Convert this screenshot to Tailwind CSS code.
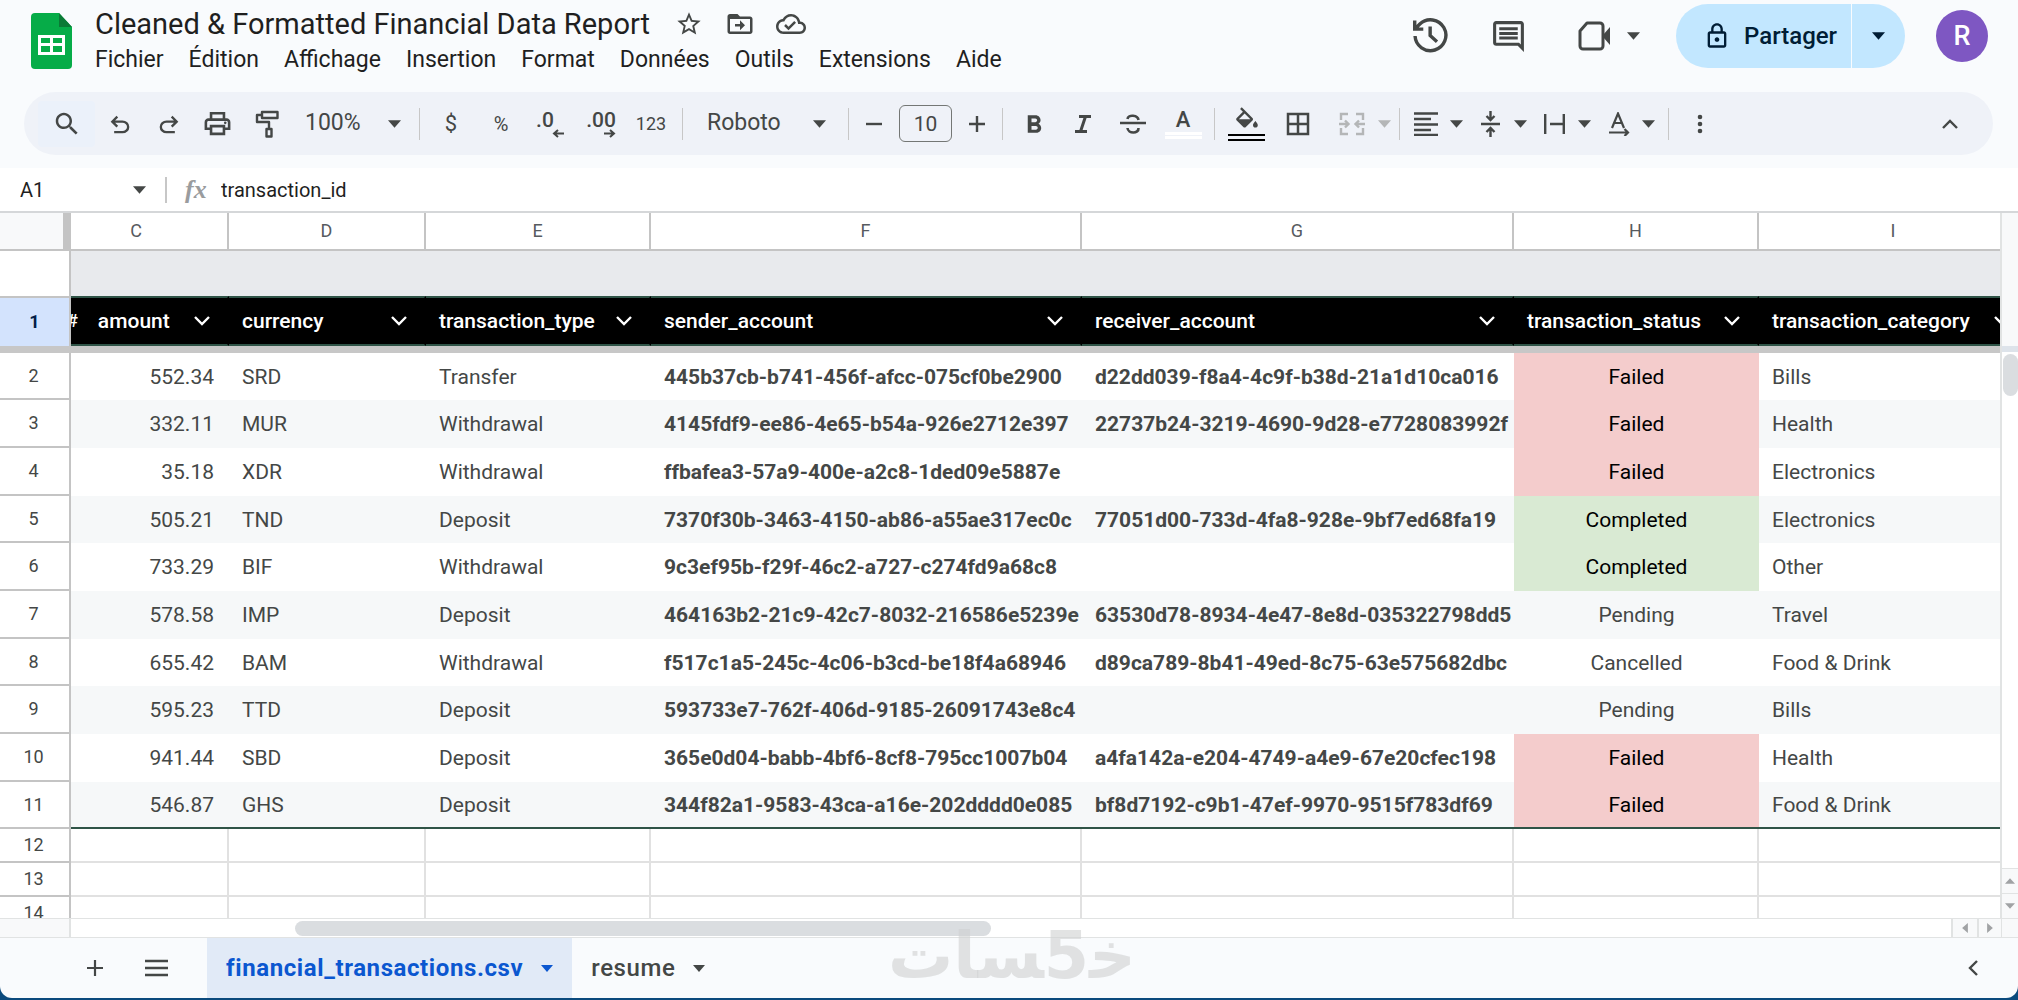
<!DOCTYPE html>
<html lang="fr">
<head>
    <meta charset="UTF-8">
    <meta name="viewport" content="width=device-width, initial-scale=1.0">
    <title>Cleaned &amp; Formatted Financial Data Report</title>
    <script src="https://cdn.jsdelivr.net/npm/@tailwindcss/browser@4"></script>
</head>
<body class="bg-[#0b4a7d] font-['Roboto',sans-serif] text-[#444746]">
    <!-- Shared icons -->
    <svg class="hidden">
        <symbol id="caret" viewBox="0 0 14 8"><path d="M0 0h14L7 8z" fill="currentColor"/></symbol>
        <symbol id="chevron" viewBox="0 0 18 12"><path d="M2 2l7 7 7-7" fill="none" stroke="currentColor" stroke-width="2.4"/></symbol>
    </svg>

    <div class="relative flex h-[calc(100vh-2px)] flex-col overflow-hidden rounded-b-xl bg-[#f9fbfd]">

        <!-- Title bar -->
        <header class="flex h-[92px] shrink-0 items-start">
            <svg class="mt-[13px] ml-[31px] h-[56px] w-[41px]" viewBox="0 0 41 56">
                <path d="M4 0h24l13 14v38a4 4 0 0 1-4 4H4a4 4 0 0 1-4-4V4a4 4 0 0 1 4-4z" fill="#06ac48"/>
                <path d="M28 0l13 14H28z" fill="#0b7a36"/>
                <path d="M7 22h27v20H7zm3 3v5h9v-5zm12 0v5h9v-5zM10 33v6h9v-6zm12 0v6h9v-6z" fill="#fff" fill-rule="evenodd"/>
            </svg>
            <div class="ml-[23px] flex flex-col">
                <div class="flex h-[46px] items-center pt-[2px]">
                    <h1 class="text-[29px] leading-[46px] text-[#1f1f1f]">Cleaned &amp; Formatted Financial Data Report</h1>
                    <button class="ml-[25px]" aria-label="Suivre"><svg class="size-[28px]" viewBox="0 0 24 24" fill="currentColor"><path d="M22 9.24l-7.19-.62L12 2 9.19 8.63 2 9.24l5.46 4.73L5.82 21 12 17.27 18.18 21l-1.63-7.03L22 9.24zM12 15.4l-3.76 2.27 1-4.28-3.32-2.88 4.38-.38L12 6.1l1.71 4.04 4.38.38-3.32 2.88 1 4.28L12 15.4z"/></svg></button>
                    <button class="ml-[22px]" aria-label="Déplacer"><svg class="size-[30px]" viewBox="0 0 24 24" fill="currentColor"><path d="M20 6h-8l-2-2H4c-1.100 0-2 .9-2 2v12c0 1.100.9 2 2 2h16c1.100 0 2-.9 2-2V8c0-1.100-.9-2-2-2zm0 12H4V8h16v10zm-8-1 4-4-4-4v3H8v2h4z"/></svg></button>
                    <button class="ml-[21px]" aria-label="Enregistré dans Drive"><svg class="size-[30px]" viewBox="0 0 24 24" fill="currentColor"><path d="M19.35 10.04C18.67 6.59 15.64 4 12 4 9.11 4 6.6 5.64 5.35 8.04 2.34 8.36 0 10.91 0 14c0 3.31 2.69 6 6 6h13c2.76 0 5-2.24 5-5 0-2.64-2.05-4.78-4.65-4.96zM19 18H6c-2.21 0-4-1.79-4-4 0-2.05 1.53-3.76 3.56-3.97l1.07-.11.5-.95C8.08 7.14 9.94 6 12 6c2.62 0 4.88 1.86 5.39 4.43l.3 1.5 1.53.11c1.56.1 2.78 1.41 2.78 2.96 0 1.65-1.35 3-3 3zm-9-3.82l-2.09-2.09L6.5 13.5 10 17l6.01-6.01-1.41-1.41z"/></svg></button>
                </div>
                <nav class="flex gap-[25px] text-[23px] leading-[28px] text-[#1f1f1f]">
                    <button>Fichier</button>
                    <button>Édition</button>
                    <button>Affichage</button>
                    <button>Insertion</button>
                    <button>Format</button>
                    <button>Données</button>
                    <button>Outils</button>
                    <button>Extensions</button>
                    <button>Aide</button>
                </nav>
            </div>

            <div class="mt-1 mr-[30px] ml-auto flex h-[64px] items-center">
                <button aria-label="Historique"><svg class="size-[36px]" viewBox="2 2 21 21" fill="none" stroke="currentColor" stroke-width="2"><path d="M3.200 12.500a9 9 0 1 0 2.800-7L3 8.500M3 3.500v5h5M12 7v5.200l4 3.600"/></svg></button>
                <button class="ml-[41px]" aria-label="Commentaires"><svg class="size-[37px]" viewBox="0 0 24 24" fill="currentColor"><path d="M21.990 4c0-1.100-.89-2-1.990-2H4c-1.100 0-2 .9-2 2v12c0 1.100.9 2 2 2h14l4 4-.01-18zM20 4v13.170L18.830 16H4V4h16zM6 12h12v2H6zm0-3h12v2H6zm0-3h12v2H6z"/></svg></button>
                <button class="ml-[51px] flex items-center gap-[17px]" aria-label="Appel"><svg class="h-[30px] w-[32px]" viewBox="0 0 32 30"><path d="M9 2h13a3 3 0 0 1 3 3v20a3 3 0 0 1-3 3H5a3 3 0 0 1-3-3V10z" fill="none" stroke="currentColor" stroke-width="3" stroke-linejoin="round"/><path d="M25 14l7-8v18l-7-8z" fill="currentColor"/></svg><svg class="h-[8px] w-[13px]"><use href="#caret"/></svg></button>
                <button class="ml-[36px] flex h-full w-[175px] items-center rounded-l-full bg-[#c2e7ff] pl-[27px] text-[24px] font-medium text-[#001d35]">
                    <svg class="mr-[13px] size-[28px]" viewBox="0 0 24 24" fill="currentColor"><path d="M18 8h-1V6c0-2.760-2.240-5-5-5S7 3.240 7 6v2H6c-1.100 0-2 .9-2 2v10c0 1.100.9 2 2 2h12c1.100 0 2-.9 2-2V10c0-1.100-.9-2-2-2zM9 6c0-1.660 1.340-3 3-3s3 1.340 3 3v2H9V6zm9 14H6V10h12v10zm-6-3c1.100 0 2-.9 2-2s-.9-2-2-2-2 .9-2 2 .9 2 2 2z"/></svg>
                    Partager
                </button>
                <button class="ml-px flex h-full w-[53px] items-center rounded-r-full bg-[#c2e7ff] pl-[20px] text-[#001d35]" aria-label="Options de partage"><svg class="h-[8px] w-[13px]"><use href="#caret"/></svg></button>
                <button class="ml-[31px] size-[52px] rounded-full bg-[#7e57c2] text-[27px] font-medium text-white">R</button>
            </div>
        </header>

        <!-- Toolbar -->
        <div class="mr-[25px] ml-[24px] flex h-[63px] shrink-0 items-center rounded-full bg-[#eff2f8] pl-[14px]">
            <button class="flex h-[46px] w-[57px] items-center justify-center rounded bg-[#ebf1fa]" aria-label="Rechercher"><svg class="size-[30px]" viewBox="0 0 24 24" fill="currentColor"><path d="M15.500 14h-.79l-.28-.27C15.410 12.590 16 11.110 16 9.500 16 5.910 13.090 3 9.500 3S3 5.910 3 9.500 5.910 16 9.500 16c1.610 0 3.090-.59 4.230-1.570l.27.28v.79l5 4.990L20.490 19l-4.990-5zm-6 0C7.010 14 5 11.990 5 9.500S7.010 5 9.500 5 14 7.010 14 9.500 11.990 14 9.500 14z"/></svg></button>
            <button class="flex w-[49px] justify-center" aria-label="Annuler"><svg class="size-[28px]" viewBox="0 0 24 24" fill="currentColor"><path d="M7 20v-2h7.100q1.575 0 2.738-1T18 14.500 16.838 12 14.100 11H7.800l2.600 2.600L9 15l-5-5 5-5 1.400 1.400L7.800 9h6.300q2.425 0 4.163 1.575T20 14.500t-1.737 3.925T14.100 20H7z"/></svg></button>
            <button class="flex w-[49px] justify-center" aria-label="Rétablir"><svg class="size-[28px] -scale-x-100" viewBox="0 0 24 24" fill="currentColor"><path d="M7 20v-2h7.100q1.575 0 2.738-1T18 14.500 16.838 12 14.100 11H7.800l2.600 2.600L9 15l-5-5 5-5 1.400 1.400L7.800 9h6.300q2.425 0 4.163 1.575T20 14.500t-1.737 3.925T14.100 20H7z"/></svg></button>
            <button class="flex w-[49px] justify-center" aria-label="Imprimer"><svg class="size-[31px]" viewBox="0 0 24 24" fill="currentColor"><path d="M19 8h-1V3H6v5H5c-1.660 0-3 1.340-3 3v6h4v4h12v-4h4v-6c0-1.660-1.340-3-3-3zM8 5h8v3H8V5zm8 12v2H8v-4h8v2zm2-2v-2H6v2H4v-4c0-.55.45-1 1-1h14c.55 0 1 .45 1 1v4h-2z"/><circle cx="18" cy="11.500" r="1"/></svg></button>
            <button class="flex w-[49px] justify-center" aria-label="Reproduire la mise en forme"><svg class="h-[28px] w-[24px]" viewBox="0 0 24 28" fill="none" stroke="currentColor" stroke-width="2.400"><path d="M7 2h15.500v6H7zM7 5H2v7h12v7M11.500 19h5v7.500h-5z" stroke-linejoin="round"/></svg></button>
            <div class="flex w-[122px] items-center justify-between pr-[12px] pl-[14px]">
                <select class="appearance-none text-[23px]" aria-label="Zoom"><option>100%</option></select>
                <svg class="h-[8px] w-[13px]"><use href="#caret"/></svg>
            </div>
            <span class="mx-[6px] h-[32px] w-px bg-[#c7c7c7]"></span>
            <button class="w-[50px] text-[22px]">$</button>
            <button class="w-[50px] text-[20px]">%</button>
            <button class="flex w-[50px] justify-center pr-[12px]" aria-label="Réduire les décimales">
                <span class="relative pb-[8px] text-[21px] leading-[20px] font-medium">.0<svg class="absolute -right-[10px] bottom-0 h-[9px] w-[12px]" viewBox="0 0 12 9" fill="none" stroke="currentColor" stroke-width="2"><path d="M12 4.500H2M6 1L2 4.500 6 8"/></svg></span>
            </button>
            <button class="flex w-[50px] justify-center" aria-label="Augmenter les décimales">
                <span class="relative pb-[8px] text-[21px] leading-[20px] font-medium">.00<svg class="absolute right-0 bottom-0 h-[9px] w-[12px]" viewBox="0 0 12 9" fill="none" stroke="currentColor" stroke-width="2"><path d="M0 4.500h10M6 1l4 3.500L6 8"/></svg></span>
            </button>
            <button class="w-[50px] text-[18px]">123</button>
            <span class="mx-[6px] h-[32px] w-px bg-[#c7c7c7]"></span>
            <div class="flex w-[153px] items-center justify-between pr-[16px] pl-[18px]">
                <select class="appearance-none text-[23px]" aria-label="Police"><option>Roboto</option></select>
                <svg class="h-[8px] w-[13px]"><use href="#caret"/></svg>
            </div>
            <span class="mx-[6px] h-[32px] w-px bg-[#c7c7c7]"></span>
            <button class="flex w-[38px] justify-center" aria-label="Diminuer"><svg class="size-[18px]" viewBox="0 0 18 18" stroke="currentColor" stroke-width="2.400"><path d="M1 9h16"/></svg></button>
            <input class="mx-[6px] h-[37px] w-[53px] rounded-md border border-[#747775] text-center text-[21px]" value="10" aria-label="Taille de police">
            <button class="flex w-[38px] justify-center" aria-label="Augmenter"><svg class="size-[18px]" viewBox="0 0 18 18" stroke="currentColor" stroke-width="2.400"><path d="M1 9h16M9 1v16"/></svg></button>
            <span class="mx-[6px] h-[32px] w-px bg-[#c7c7c7]"></span>
            <button class="flex w-[49px] justify-center" aria-label="Gras"><svg class="size-[30px]" viewBox="0 0 24 24" fill="currentColor"><path d="M15.600 11.790c.97-.67 1.650-1.770 1.650-2.790 0-2.260-1.750-4-4-4H7v14h7.040c2.090 0 3.710-1.700 3.710-3.790 0-1.520-.86-2.820-2.150-3.420zM10 7.500h3c.83 0 1.500.67 1.500 1.500s-.67 1.500-1.500 1.500h-3v-3zm3.500 9H10v-3h3.500c.83 0 1.500.67 1.500 1.500s-.67 1.500-1.500 1.500z"/></svg></button>
            <button class="flex w-[50px] justify-center" aria-label="Italique"><svg class="size-[20px]" viewBox="0 0 20 20" fill="none" stroke="currentColor" stroke-width="3"><path d="M6 2.500h12M2 17.500h12M12.500 2.500l-5 15"/></svg></button>
            <button class="flex w-[50px] justify-center" aria-label="Barré"><svg class="h-[20px] w-[26px]" viewBox="0 0 26 20" fill="none" stroke="currentColor" stroke-width="2.600"><path d="M0 9h26M18.500 6c-.5-5-10.500-6-11-1M7.500 14c.5 6 11.500 6 11 0"/></svg></button>
            <button class="flex w-[50px] flex-col items-center" aria-label="Couleur du texte">
                <span class="text-[22px] leading-[24px] font-medium">A</span>
                <span class="h-[7px] w-[37px] border-y-[3px] border-white"></span>
            </button>
            <span class="mx-[6px] h-[32px] w-px bg-[#c7c7c7]"></span>
            <button class="flex w-[51px] flex-col items-center gap-[4px]" aria-label="Couleur de remplissage">
                <svg class="size-[24px]" viewBox="2 0 20 18" fill="currentColor"><path d="M16.560 8.940L7.620 0 6.210 1.410l2.380 2.380-5.150 5.150c-.59.59-.59 1.540 0 2.120l5.500 5.500c.29.29.68.44 1.060.44s.77-.15 1.060-.44l5.500-5.500c.59-.58.59-1.530 0-2.120zM5.210 10L10 5.210 14.790 10H5.210zM19 11.500s-2 2.170-2 3.500c0 1.100.9 2 2 2s2-.9 2-2c0-1.330-2-3.500-2-3.500z"/></svg>
                <span class="h-[7px] w-[37px] border-y-2 border-black"></span>
            </button>
            <button class="flex w-[51px] justify-center" aria-label="Bordures"><svg class="size-[30px]" viewBox="0 0 24 24" fill="currentColor"><path d="M3 3v18h18V3H3zm8 16H5v-6h6v6zm0-8H5V5h6v6zm8 8h-6v-6h6v6zm0-8h-6V5h6v6z"/></svg></button>
            <button class="flex w-[70px] items-center gap-[13px] pl-[16px] text-[#b4b6b7]" aria-label="Fusionner"><svg class="h-[24px] w-[26px]" viewBox="0 0 26 24" fill="none" stroke="currentColor" stroke-width="2.400"><path d="M9 2H2v6M2 16v6h7M17 2h7v6M24 16v6h-7M0 12h9M6 8.500L9.500 12 6 15.500M26 12h-9M20 8.500L16.500 12l3.500 3.500"/></svg><svg class="h-[8px] w-[13px]"><use href="#caret"/></svg></button>
            <span class="mx-[6px] h-[32px] w-px bg-[#c7c7c7]"></span>
            <button class="flex w-[64px] items-center justify-between pr-[7px] pl-[8px]" aria-label="Alignement horizontal"><svg class="size-[24px]" viewBox="0 0 24 24" stroke="currentColor" stroke-width="2.400"><path d="M0 1.500h24M0 7h17M0 12.500h24M0 18h17M0 23h24"/></svg><svg class="h-[8px] w-[13px]"><use href="#caret"/></svg></button>
            <button class="flex w-[64px] items-center justify-between pr-[7px] pl-[11px]" aria-label="Alignement vertical"><svg class="h-[26px] w-[19px]" viewBox="0 0 19 26" fill="none" stroke="currentColor" stroke-width="2.400"><path d="M0 13h19M9.500 0v8M5.500 5l4 4 4-4M9.500 26v-8M5.500 21l4-4 4 4"/></svg><svg class="h-[8px] w-[13px]"><use href="#caret"/></svg></button>
            <button class="flex w-[64px] items-center justify-between pr-[7px] pl-[10px]" aria-label="Retour à la ligne"><svg class="h-[20px] w-[21px]" viewBox="0 0 21 20" fill="none" stroke="currentColor" stroke-width="2.400"><path d="M1.200 0v20M19.800 0v20M6 10h13"/></svg><svg class="h-[8px] w-[13px]"><use href="#caret"/></svg></button>
            <button class="flex w-[64px] items-center justify-between pr-[7px] pl-[11px]" aria-label="Rotation du texte"><svg class="h-[24px] w-[21px]" viewBox="0 0 21 24" fill="none" stroke="currentColor" stroke-width="2.200"><path d="M3 16L9 1.500 15 16M5 11h8M0 20.500h18M15.500 17l3.500 3.500-3.500 3.500"/></svg><svg class="h-[8px] w-[13px]"><use href="#caret"/></svg></button>
            <span class="mx-[6px] h-[32px] w-px bg-[#c7c7c7]"></span>
            <button class="flex w-[50px] justify-center" aria-label="Plus"><svg class="h-[20px] w-[6px]" viewBox="0 0 6 20" fill="currentColor"><circle cx="3" cy="3" r="2.300"/><circle cx="3" cy="10" r="2.300"/><circle cx="3" cy="17" r="2.300"/></svg></button>
            <button class="mr-[18px] ml-auto flex w-[50px] justify-center" aria-label="Masquer les menus"><svg class="h-[12px] w-[18px] rotate-180"><use href="#chevron"/></svg></button>
        </div>

        <!-- Formula bar -->
        <div class="mt-[13px] flex h-[45px] shrink-0 items-center border-b-2 border-[#d5d7d9] bg-white text-[20px] text-[#1f1f1f]">
            <input class="ml-[20px] w-[113px]" value="A1" aria-label="Zone Nom">
            <svg class="h-[8px] w-[13px] text-[#444746]"><use href="#caret"/></svg>
            <span class="ml-[19px] h-[26px] w-[2px] bg-[#c7c7c7]"></span>
            <span class="ml-[18px] w-[36px] font-['Liberation_Serif',serif] text-[26px] leading-[28px] font-bold text-[#9a9c9e] italic">fx</span>
            <input class="grow" value="transaction_id" aria-label="Barre de formule">
        </div>

        <!-- Grid -->
        <div class="flex min-h-0 grow bg-white">
            <div class="min-w-0 grow overflow-hidden">
                <table class="w-[2029px] table-fixed border-separate border-spacing-0 text-[21px] leading-[28px]">
                    <colgroup>
                        <col class="w-[71px]">
                        <col class="w-[158px]">
                        <col class="w-[197px]">
                        <col class="w-[225px]">
                        <col class="w-[431px]">
                        <col class="w-[432px]">
                        <col class="w-[245px]">
                        <col class="w-[270px]">
                    </colgroup>
                    <thead>
                        <tr class="h-[38px] text-[18px] text-[#575b5f]">
                            <th class="border-r-8 border-b-2 border-[#c4c4c4] bg-[#f8f9fa]"></th>
                            <th class="border-r-2 border-b-2 border-[#c4c4c4] pr-[26px] font-normal">C</th>
                            <th class="border-r-2 border-b-2 border-[#c4c4c4] font-normal">D</th>
                            <th class="border-r-2 border-b-2 border-[#c4c4c4] font-normal">E</th>
                            <th class="border-r-2 border-b-2 border-[#c4c4c4] font-normal">F</th>
                            <th class="border-r-2 border-b-2 border-[#c4c4c4] font-normal">G</th>
                            <th class="border-r-2 border-b-2 border-[#c4c4c4] font-normal">H</th>
                            <th class="border-r-2 border-b-2 border-[#c4c4c4] font-normal">I</th>
                        </tr>
                        <tr class="h-[45px]">
                            <td class="border-r-2 border-[#c4c4c4]"></td>
                            <td class="bg-[#e8eaed]" colspan="7"></td>
                        </tr>
                        <tr id="headings" class="h-[50px] text-white">
                            <th class="border-t-2 border-r-2 border-[#c4c4c4] bg-[#d3e3fd] text-[18px] font-bold text-[#041e49]">1</th>
                        </tr>
                        <tr class="h-[7px]">
                            <td class="bg-[#c7c7c7] p-0" colspan="8"></td>
                        </tr>
                    </thead>
                    <tbody id="rows"></tbody>
                </table>
            </div>

            <!-- Vertical scrollbar -->
            <div class="flex w-[18px] shrink-0 flex-col border-l-2 border-[#e1e3e3]">
                <div class="h-[133px] bg-[#f8f9fa]"></div>
                <div class="h-[6px] bg-[#dde3ea]"></div>
                <div class="mt-[2px] ml-px h-[42px] rounded-full bg-[#dadde0]"></div>
                <button class="mt-auto flex h-[26px] items-center justify-center border-y border-[#e1e3e3] bg-[#f8f9fa] text-[#a0a2a4]" aria-label="Haut"><svg class="h-[6px] w-[10px] rotate-180"><use href="#caret"/></svg></button>
                <button class="flex h-[24px] items-center justify-center bg-[#f8f9fa] text-[#a0a2a4]" aria-label="Bas"><svg class="h-[6px] w-[10px]"><use href="#caret"/></svg></button>
            </div>
        </div>

        <!-- Horizontal scrollbar -->
        <div class="flex h-[20px] shrink-0 border-y border-[#e1e3e3] bg-white">
            <div class="w-[71px] border-r-2 border-[#e1e3e3] bg-[#f8f9fa]"></div>
            <div class="flex grow items-center pl-[224px]"><div class="h-[15px] w-[42%] rounded-full bg-[#dadde0]"></div></div>
            <button class="flex w-[26px] items-center justify-center border-l-2 border-[#e1e3e3] bg-[#f8f9fa] text-[#a0a2a4]" aria-label="Gauche"><svg class="h-[6px] w-[10px] rotate-90"><use href="#caret"/></svg></button>
            <button class="flex w-[24px] items-center justify-center border-l-2 border-[#e1e3e3] bg-[#f8f9fa] text-[#a0a2a4]" aria-label="Droite"><svg class="h-[6px] w-[10px] -rotate-90"><use href="#caret"/></svg></button>
            <div class="w-[17px] border-l border-[#e1e3e3] bg-[#f8f9fa]"></div>
        </div>

        <!-- Sheet tabs -->
        <footer class="flex h-[60px] shrink-0 items-center text-[24px] font-medium tracking-wide">
            <button class="ml-[86px]" aria-label="Ajouter une feuille"><svg class="size-[18px]" viewBox="0 0 18 18" stroke="currentColor" stroke-width="2.200"><path d="M1 9h16M9 1v16"/></svg></button>
            <button class="ml-[41px]" aria-label="Toutes les feuilles"><svg class="h-[18px] w-[23px]" viewBox="0 0 23 18" stroke="currentColor" stroke-width="2.600"><path d="M0 2h23M0 9h23M0 16h23"/></svg></button>
            <button class="ml-[39px] flex h-full items-center gap-[18px] bg-[#e1eaf7] px-[19px] font-bold text-[#0b57d0]">financial_transactions.csv<svg class="h-[7px] w-[12px]"><use href="#caret"/></svg></button>
            <button class="ml-[19px] flex items-center gap-[18px]">resume<svg class="h-[7px] w-[12px]"><use href="#caret"/></svg></button>
            <button class="mr-[36px] ml-auto" aria-label="Afficher le panneau"><svg class="h-[12px] w-[18px] rotate-90"><use href="#chevron"/></svg></button>
        </footer>

        <!-- Watermark -->
        <div class="pointer-events-none absolute bottom-[8px] left-[44%] font-['DejaVu_Sans',sans-serif] text-[65px] leading-[68px] font-bold text-[#cfd1d1]/60" dir="rtl" lang="ar">خ&zwj;5&zwj;سات</div>
    </div>

    <script>
        const headings = ['amount', 'currency', 'transaction_type', 'sender_account', 'receiver_account', 'transaction_status', 'transaction_category'];

        const data = [
            ['552.34', 'SRD', 'Transfer', '445b37cb-b741-456f-afcc-075cf0be2900', 'd22dd039-f8a4-4c9f-b38d-21a1d10ca016', 'Failed', 'Bills'],
            ['332.11', 'MUR', 'Withdrawal', '4145fdf9-ee86-4e65-b54a-926e2712e397', '22737b24-3219-4690-9d28-e7728083992f', 'Failed', 'Health'],
            ['35.18', 'XDR', 'Withdrawal', 'ffbafea3-57a9-400e-a2c8-1ded09e5887e', '', 'Failed', 'Electronics'],
            ['505.21', 'TND', 'Deposit', '7370f30b-3463-4150-ab86-a55ae317ec0c', '77051d00-733d-4fa8-928e-9bf7ed68fa19', 'Completed', 'Electronics'],
            ['733.29', 'BIF', 'Withdrawal', '9c3ef95b-f29f-46c2-a727-c274fd9a68c8', '', 'Completed', 'Other'],
            ['578.58', 'IMP', 'Deposit', '464163b2-21c9-42c7-8032-216586e5239e', '63530d78-8934-4e47-8e8d-035322798dd5', 'Pending', 'Travel'],
            ['655.42', 'BAM', 'Withdrawal', 'f517c1a5-245c-4c06-b3cd-be18f4a68946', 'd89ca789-8b41-49ed-8c75-63e575682dbc', 'Cancelled', 'Food & Drink'],
            ['595.23', 'TTD', 'Deposit', '593733e7-762f-406d-9185-26091743e8c4', '', 'Pending', 'Bills'],
            ['941.44', 'SBD', 'Deposit', '365e0d04-babb-4bf6-8cf8-795cc1007b04', 'a4fa142a-e204-4749-a4e9-67e20cfec198', 'Failed', 'Health'],
            ['546.87', 'GHS', 'Deposit', '344f82a1-9583-43ca-a16e-202dddd0e085', 'bf8d7192-c9b1-47ef-9970-9515f783df69', 'Failed', 'Food & Drink'],
        ];

        const cellClass = [
            'pr-[15px] text-right',
            'pl-[13px]',
            'pl-[13px]',
            'pl-[13px] font-bold',
            'pl-[13px] font-bold',
            'text-center',
            'pl-[13px]',
        ];

        const statusClass = {
            Failed: 'bg-[#f4cccc] text-black',
            Completed: 'bg-[#d9ead3] text-black',
        };

        const headRow = document.getElementById('headings');
        headings.forEach((name, i) => {
            const th = document.createElement('th');
            th.className = 'overflow-hidden border-y-2 border-r-2 border-y-[#2f5447] border-r-black bg-black p-0 font-medium';
            const hash = i === 0 ? '<span class="-ml-[4px] mr-[20px] text-[18px]">#</span>' : '';
            const pad = i === 0 ? '' : 'pl-[13px]';
            th.innerHTML = `<div class="flex items-center pr-[16px] ${pad}">${hash}<span>${name}</span><svg class="ml-auto h-[12px] w-[18px] shrink-0"><use href="#chevron"/></svg></div>`;
            headRow.appendChild(th);
        });

        const body = document.getElementById('rows');
        data.forEach((record, i) => {
            const last = i === data.length - 1;
            const tr = document.createElement('tr');
            tr.className = (i % 3 === 0 ? 'h-[47px]' : 'h-[48px]') + (i % 2 ? ' bg-[#f6f8f9]' : '');

            const num = document.createElement('th');
            num.className = 'border-r-2 border-b-2 border-[#c4c4c4] bg-white p-0 pr-[2px] text-[18px] font-normal';
            num.textContent = i + 2;
            tr.appendChild(num);

            record.forEach((value, c) => {
                const td = document.createElement('td');
                td.className = 'whitespace-nowrap py-0 ' + cellClass[c] + ' ' + (c === 5 ? statusClass[value] || '' : '');
                if (last) td.className += ' border-b-2 border-[#2f5447]';
                td.textContent = value;
                tr.appendChild(td);
            });
            body.appendChild(tr);
        });

        // Empty rows under the table
        for (let n = 12; n <= 14; n++) {
            const tr = document.createElement('tr');
            tr.className = 'h-[34px]';
            tr.innerHTML = `<th class="border-r-2 border-b-2 border-[#c4c4c4] p-0 pr-[2px] text-[18px] leading-[20px] font-normal">${n}</th>`
                + '<td class="border-r-2 border-b-2 border-[#e1e1e1] p-0"></td>'.repeat(7);
            body.appendChild(tr);
        }
    </script>
</body>
</html>
